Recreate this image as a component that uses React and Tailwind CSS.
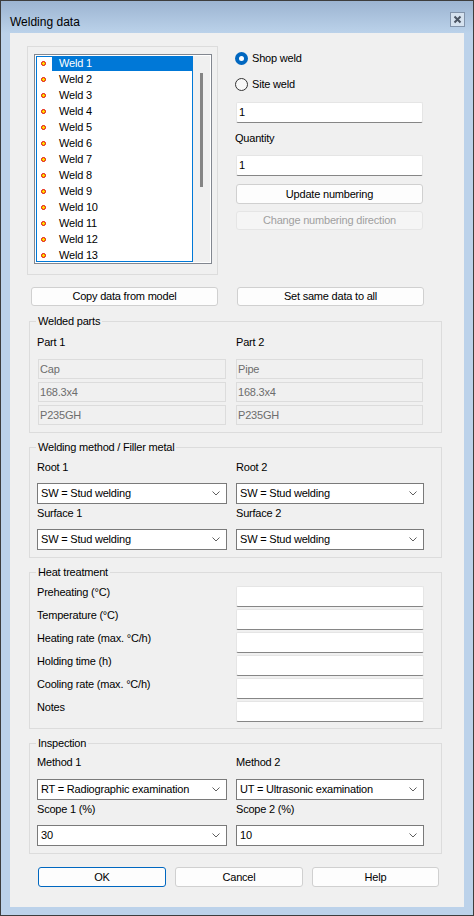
import React from 'react';

const welds = Array.from({ length: 13 }, (_, i) => `Weld ${i + 1}`);

const heatRows = [
  'Preheating (°C)',
  'Temperature (°C)',
  'Heating rate (max. °C/h)',
  'Holding time (h)',
  'Cooling rate (max. °C/h)',
  'Notes',
];

function Chevron() {
  return (
    <svg width="8" height="5" viewBox="0 0 8 5" className="shrink-0">
      <polyline points="0.5,0.5 4,4 7.5,0.5" fill="none" stroke="#5f5f5f" strokeWidth="1" />
    </svg>
  );
}

function Select({ value, className }) {
  return (
    <div className={`flex h-[21px] items-center justify-between border border-[#7a7a7a] bg-white pl-[3px] pr-[6px] ${className}`}>
      <span>{value}</span>
      <Chevron />
    </div>
  );
}

function TextBox({ value = '', className }) {
  return (
    <div className={`flex items-center rounded-[2px] border border-[#e5e5e5] border-b-[#868686] bg-white px-[2px] ${className}`}>
      {value}
    </div>
  );
}

function ReadOnly({ value }) {
  return (
    <div className="flex h-[20px] items-center border border-[#dcdcdc] bg-[#f0f0f0] px-px text-[#6d6d6d]">
      {value}
    </div>
  );
}

function Button({ children, className, disabled, primary }) {
  let look = 'border-[#d0d0d0] bg-[#fdfdfd] text-black';
  if (disabled) look = 'border-[#e5e5e5] bg-[#f5f5f5] text-[#a0a0a0]';
  if (primary) look = 'border-[#0067c0] bg-[#fdfdfd] text-black';
  return (
    <div className={`flex items-center justify-center rounded-[3px] border ${look} ${className}`}>
      {children}
    </div>
  );
}

function Radio({ checked, label, className }) {
  return (
    <div className={`-ml-px flex h-[20px] items-center gap-[4px] ${className}`}>
      {checked ? (
        <span className="flex h-[13px] w-[13px] items-center justify-center rounded-full bg-[#0067c0]">
          <span className="h-[5px] w-[5px] rounded-full bg-white" />
        </span>
      ) : (
        <span className="h-[13px] w-[13px] rounded-full border border-[#333333] bg-[#f8f8f8]" />
      )}
      <span>{label}</span>
    </div>
  );
}

function Group({ title, className, children }) {
  return (
    <div className={`relative border border-[#dcdcdc] ${className}`}>
      <span className="absolute -top-[8px] left-[6px] bg-[#f0f0f0] px-[2px] leading-[14px]">{title}</span>
      {children}
    </div>
  );
}

export default function App() {
  return (
    <div className="flex h-[916px] w-[474px] flex-col border border-[#3d3d3d] bg-[#bcd2ea] font-['Liberation_Sans',Arial,sans-serif] text-[11px] tracking-[-0.2px] text-black">
      <div className="flex h-[32px] shrink-0 items-start justify-between bg-gradient-to-b from-[#9cb4d1] to-[#bbd2ea] pl-[9px] pr-[8px]">
        <span className="mt-[13px] text-[12px] leading-[16px] tracking-normal">Welding data</span>
        <div className="mt-[11px] flex h-[15px] w-[15px] items-center justify-center border border-[#8293aa] bg-[#d6e2ef]">
          <svg width="9" height="9" viewBox="0 0 9 9">
            <path d="M1.5 1.5 L7.5 7.5 M7.5 1.5 L1.5 7.5" stroke="#4b5563" strokeWidth="2" />
          </svg>
        </div>
      </div>

      <div className="flex flex-1 px-[9px] pb-[8px]">
        <div className="flex flex-1 flex-col bg-[#f0f0f0]">
          <div className="ml-[17px] mt-[13px] flex">
            <div className="h-[229px] w-[191px] border border-[#dcdcdc] pl-[6px] pt-[7px]">
              <div className="flex h-[210px] w-[178px] border border-[#828790] bg-white p-px">
                <div className="relative w-[157px] overflow-hidden">
                  <div className="-mt-px">
                    {welds.map((w, i) => (
                      <div key={w} className="flex h-[16px] items-center">
                        <div className="flex w-[16px] pl-[5px]">
                          <span className="h-[5px] w-[5px] rounded-full border border-[#e00000] bg-[#ffe000]" />
                        </div>
                        <div className={`flex h-full flex-1 items-center pl-[7px] ${i === 0 ? 'bg-[#0078d7] text-white' : ''}`}>
                          {w}
                        </div>
                      </div>
                    ))}
                  </div>
                  <div className="pointer-events-none absolute inset-0 border border-[#0078d7]" />
                </div>
                <div className="flex-1 bg-[#f0f0f0]">
                  <div className="ml-[7px] mt-[17px] h-[114px] w-[3px] bg-[#858585]" />
                </div>
              </div>
            </div>

            <div className="ml-[18px] flex w-[187px] flex-col">
              <Radio checked label="Shop weld" className="mt-[2px]" />
              <Radio label="Site weld" className="mt-[6px]" />
              <TextBox value="1" className="mt-[8px] h-[21px]" />
              <div className="-ml-px mt-[7px] h-[16px] leading-[16px]">Quantity</div>
              <TextBox value="1" className="mt-[9px] h-[21px]" />
              <Button className="mt-[8px] h-[20px]">Update numbering</Button>
              <Button disabled className="mt-[7px] h-[19px]">Change numbering direction</Button>
            </div>
          </div>

          <div className="ml-[21px] mt-[12px] flex">
            <Button className="h-[19px] w-[187px]">Copy data from model</Button>
            <Button className="ml-[19px] h-[19px] w-[187px]">Set same data to all</Button>
          </div>

          <Group title="Welded parts" className="ml-[19px] mt-[15px] h-[112px] w-[413px] pl-[8px] pt-[12px]">
            <div className="flex gap-[10px]">
              <div className="flex w-[188px] flex-col">
                <div className="-ml-px h-[16px] leading-[16px]">Part 1</div>
                <div className="mt-[9px] flex flex-col gap-[3px]">
                  <ReadOnly value="Cap" />
                  <ReadOnly value="168.3x4" />
                  <ReadOnly value="P235GH" />
                </div>
              </div>
              <div className="flex w-[187px] flex-col">
                <div className="h-[16px] leading-[16px]">Part 2</div>
                <div className="mt-[9px] flex flex-col gap-[3px]">
                  <ReadOnly value="Pipe" />
                  <ReadOnly value="168.3x4" />
                  <ReadOnly value="P235GH" />
                </div>
              </div>
            </div>
          </Group>

          <Group title="Welding method / Filler metal" className="ml-[19px] mt-[14px] h-[111px] w-[413px] pl-[7px] pt-[11px]">
            <div className="flex gap-[9px]">
              <div className="flex w-[190px] flex-col">
                <div className="h-[16px] leading-[16px]">Root 1</div>
                <Select value="SW = Stud welding" className="mt-[8px]" />
                <div className="mt-px h-[16px] leading-[16px]">Surface 1</div>
                <Select value="SW = Stud welding" className="mt-[8px]" />
              </div>
              <div className="flex w-[188px] flex-col">
                <div className="h-[16px] leading-[16px]">Root 2</div>
                <Select value="SW = Stud welding" className="mt-[8px]" />
                <div className="mt-px h-[16px] leading-[16px]">Surface 2</div>
                <Select value="SW = Stud welding" className="mt-[8px]" />
              </div>
            </div>
          </Group>

          <Group title="Heat treatment" className="ml-[19px] mt-[14px] h-[157px] w-[413px] pl-[7px] pt-[13px]">
            <div className="flex flex-col gap-[2px]">
              {heatRows.map((r) => (
                <div key={r} className="flex items-start">
                  <div className="w-[199px] leading-[12px]">{r}</div>
                  <TextBox className="h-[21px] w-[188px]" />
                </div>
              ))}
            </div>
          </Group>

          <Group title="Inspection" className="ml-[19px] mt-[14px] h-[111px] w-[413px] pl-[7px] pt-[10px]">
            <div className="flex gap-[9px]">
              <div className="flex w-[190px] flex-col">
                <div className="h-[16px] leading-[16px]">Method 1</div>
                <Select value="RT = Radiographic examination" className="mt-[9px]" />
                <div className="mt-px h-[16px] leading-[16px]">Scope 1 (%)</div>
                <Select value="30" className="mt-[8px]" />
              </div>
              <div className="flex w-[188px] flex-col">
                <div className="h-[16px] leading-[16px]">Method 2</div>
                <Select value="UT = Ultrasonic examination" className="mt-[9px]" />
                <div className="mt-px h-[16px] leading-[16px]">Scope 2 (%)</div>
                <Select value="10" className="mt-[8px]" />
              </div>
            </div>
          </Group>

          <div className="ml-[28px] mt-[13px] flex">
            <Button primary className="h-[20px] w-[128px]">OK</Button>
            <Button className="ml-[9px] h-[20px] w-[128px]">Cancel</Button>
            <Button className="ml-[9px] h-[20px] w-[127px]">Help</Button>
          </div>
        </div>
      </div>
    </div>
  );
}
